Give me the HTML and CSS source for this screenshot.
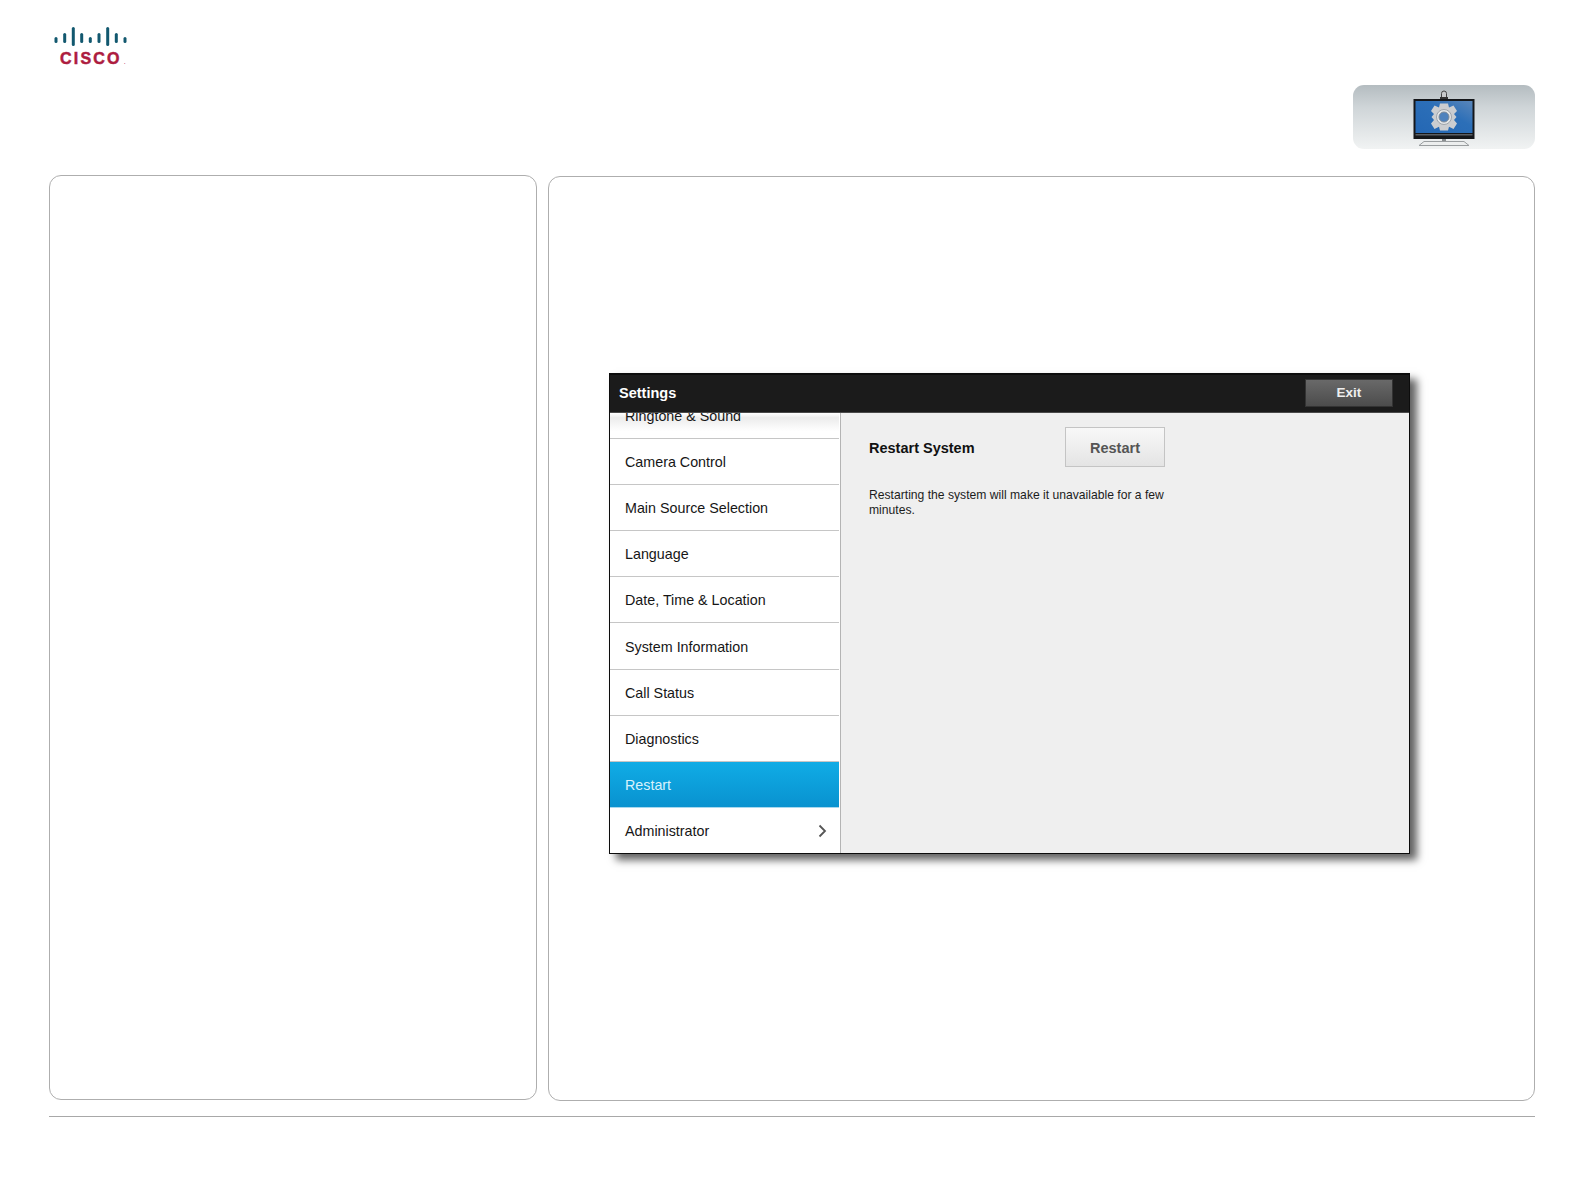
FILE: index.html
```html
<!DOCTYPE html>
<html lang="en">
<head>
<meta charset="utf-8">
<title>Settings - Restart</title>
<link rel="stylesheet" href="styles.css">
</head>
<body>
<header class="top">
  <div class="logo">
    <svg class="logo-bars" width="80" height="24" viewBox="0 0 80 24">
      <g fill="#12586f">
        <rect x="1.5" y="10" width="3" height="6" rx="1.5"/>
        <rect x="10.2" y="6" width="3" height="10" rx="1.5"/>
        <rect x="18.8" y="0" width="3" height="19" rx="1.5"/>
        <rect x="27.2" y="6" width="3" height="10" rx="1.5"/>
        <rect x="35.8" y="10" width="3" height="6" rx="1.5"/>
        <rect x="44.5" y="6" width="3" height="10" rx="1.5"/>
        <rect x="53.2" y="0" width="3" height="19" rx="1.5"/>
        <rect x="61.8" y="6" width="3" height="10" rx="1.5"/>
        <rect x="70.5" y="10" width="3" height="6" rx="1.5"/>
      </g>
    </svg>
    <div class="logo-word">CISCO<span class="logo-dot">.</span></div>
  </div>
  <div class="badge">
    <svg width="64" height="58" viewBox="0 0 64 58">
      <defs>
        <linearGradient id="scr" x1="0" y1="1" x2="1" y2="0">
          <stop offset="0" stop-color="#2467b4"/>
          <stop offset="0.6" stop-color="#2c6fb8"/>
          <stop offset="1" stop-color="#5a86ba"/>
        </linearGradient>
      </defs>
      <path d="M29.500 8V3.500a2.500 2.500 0 0 1 5 0V8z" fill="#c8cacc" stroke="#444" stroke-width="1"/>
      <rect x="28" y="7" width="8" height="2" fill="#333"/>
      <rect x="1.500" y="9" width="61" height="40" fill="#15171a"/>
      <rect x="3.500" y="11" width="57" height="32" fill="url(#scr)"/>
      <rect x="3.500" y="44" width="57" height="1.500" fill="#5a5e62"/>
      <rect x="30" y="49" width="4" height="3" fill="#8a8e90"/>
      <path d="M7 55.500 12 51.500H52L57 55.500z" fill="#eceeee" stroke="#9a9ea0"/>
      <g transform="translate(32 27)">
        <path fill="#cbcdd0" d="M-4-13.500H4L5-9.500 9.500-11.500 13-6 10-3 12.500 0 10 3 13 6.500 9.500 12 5 9.800 4 13.500H-4L-5 9.800-9.500 12-13 6.500-10 3-12.500 0-10-3-13-6-9.500-11.500-5-9.500z"/>
        <circle r="7.500" fill="#e4e6e8" stroke="#9ea4aa" stroke-width="1"/>
        <circle r="5" fill="#4f82bd" stroke="#7f8b98" stroke-width="1"/>
      </g>
    </svg>
  </div>
</header>
<main class="panels">
  <section class="panel panel-left"></section>
  <section class="panel panel-right">
    <div class="dialog">
      <div class="dialog-head">
        <span class="dialog-title">Settings</span>
        <span class="exit">Exit</span>
      </div>
      <div class="dialog-body">
        <nav class="side">
          <ul class="menu">
            <li class="item item-fade">Ringtone &amp; Sound</li>
            <li class="item">Camera Control</li>
            <li class="item">Main Source Selection</li>
            <li class="item">Language</li>
            <li class="item">Date, Time &amp; Location</li>
            <li class="item">System Information</li>
            <li class="item">Call Status</li>
            <li class="item">Diagnostics</li>
            <li class="item item-active">Restart</li>
            <li class="item item-last">Administrator
              <svg class="chev" width="9" height="14" viewBox="0 0 9 14"><path d="M1.500 1.500 7 7l-5.500 5.500" fill="none" stroke="#555" stroke-width="1.800"/></svg>
            </li>
          </ul>
        </nav>
        <div class="content">
          <div class="restart-row">
            <span class="restart-label">Restart System</span>
            <span class="restart-btn">Restart</span>
          </div>
          <p class="note">Restarting the system will make it unavailable for a few minutes.</p>
        </div>
      </div>
    </div>
  </section>
</main>
<hr class="rule">
</body>
</html>
```

FILE: styles.css
```css
* { box-sizing: border-box; }
html, body { margin: 0; padding: 0; }
body {
  width: 1584px;
  height: 1191px;
  overflow: hidden;
  background: #fff;
  font-family: "Liberation Sans", Arial, sans-serif;
  color: #111;
}
.top {
  height: 175px;
  padding: 27px 49px 0 49px;
  display: flex;
  justify-content: space-between;
  align-items: flex-start;
}
.logo { width: 84px; padding-left: 4px; }
.logo-bars { display: block; }
.logo-word {
  margin-top: 0;
  padding-left: 7px;
  font-family: "Liberation Sans", Arial, sans-serif;
  font-weight: 700;
  font-size: 16px;
  line-height: 16px;
  letter-spacing: 2.200px;
  -webkit-text-stroke: .5px #ad1c3f;
  color: #ad1c3f;
  white-space: nowrap;
}
.logo-dot {
  font-size: 7px;
  font-weight: 400;
  letter-spacing: 0;
  margin-left: 2px;
  -webkit-text-stroke: 0;
}
.badge {
  width: 182px;
  height: 64px;
  margin-top: 58px;
  border-radius: 11px;
  background: linear-gradient(#b4bcc0 0, #cfd5d8 35%, #f1f3f3 100%);
  display: flex;
  justify-content: center;
  align-items: flex-start;
  padding-top: 5px;
}
.panels {
  display: flex;
  align-items: flex-start;
  gap: 11px;
  padding-left: 49px;
}
.panel {
  border: 1px solid #aeaeae;
  border-radius: 12px;
  height: 925px;
}
.panel-left { width: 488px; }
.panel-right {
  width: 987px;
  margin-top: 1px;
  padding: 196px 0 0 60px;
}
.dialog {
  width: 801px;
  height: 481px;
  border: 1px solid #0c0c0c;
  border-top-width: 2px;
  background: #efefef;
  box-shadow: 7px 6px 8px rgba(0, 0, 0, .62);
  display: flex;
  flex-direction: column;
}
.dialog-head {
  height: 38px;
  flex: none;
  background: #1b1b1b;
  border-bottom: 1px solid #4a4a4a;
  display: flex;
  align-items: center;
  justify-content: space-between;
  padding: 0 16px 2px 9px;
  position: relative;
  z-index: 1;
}
.dialog-title {
  color: #fff;
  font-weight: 700;
  font-size: 14.500px;
}
.exit {
  width: 88px;
  height: 28px;
  background: linear-gradient(#696969, #4c4c4c);
  border: 1px solid #333;
  color: #eee;
  font-weight: 700;
  font-size: 13.500px;
  display: flex;
  align-items: center;
  justify-content: center;
}
.dialog-body {
  flex: 1;
  min-height: 0;
  display: flex;
}
.side {
  width: 231px;
  flex: none;
  background: #fff;
  border-right: 1px solid #b4b4b4;
  overflow: hidden;
}
.menu {
  list-style: none;
  margin: -20px 0 0;
  padding: 0;
}
.item {
  height: 46.100px;
  border-bottom: 1px solid #c6c6c6;
  padding: 1px 12px 0 15px;
  margin-right: 1px;
  display: flex;
  align-items: center;
  justify-content: space-between;
  font-size: 14.300px;
  color: #161616;
}
.item-fade { background: linear-gradient(#fff 45%, #ececec 55%, #fff 85%); }
.item-active {
  background: linear-gradient(#10ace6, #0992cf);
  color: #d8f2fc;
  border-bottom: 1px solid #a8d8ee;
}
.item-last { border-bottom: 0; }
.chev { display: block; }
.content {
  flex: 1;
  padding: 14px 0 0 28px;
}
.restart-row {
  display: flex;
  align-items: center;
  width: 296px;
  justify-content: space-between;
}
.restart-label {
  padding-top: 1px;
  font-weight: 700;
  font-size: 14.500px;
}
.restart-btn {
  width: 100px;
  height: 40px;
  padding-top: 1px;
  border: 1px solid #c4c4c4;
  background: linear-gradient(#f8f8f8, #e4e4e4);
  color: #555;
  font-weight: 700;
  font-size: 14.500px;
  display: flex;
  align-items: center;
  justify-content: center;
}
.note {
  margin: 21px 0 0;
  width: 300px;
  font-size: 12.150px;
  line-height: 15px;
  color: #1c1c1c;
}
.rule {
  border: 0;
  border-top: 1px solid #a8a8a8;
  margin: 15px 49px 0 49px;
  height: 0;
}
```
